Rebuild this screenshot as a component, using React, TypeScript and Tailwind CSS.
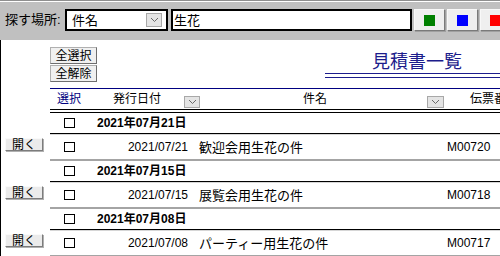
import React from 'react';

const rows = [
  { group: '2021年07月21日', date: '2021/07/21', subject: '歓迎会用生花の件', no: 'M00720' },
  { group: '2021年07月15日', date: '2021/07/15', subject: '展覧会用生花の件', no: 'M00718' },
  { group: '2021年07月08日', date: '2021/07/08', subject: 'パーティー用生花の件', no: 'M00717' },
];

function Chevron({ className }: { className: string }) {
  return (
    <div className={`flex shrink-0 items-center justify-center border border-[#a8a8a8] bg-[#e4e4e4] ${className}`}>
      <svg width="9" height="6" viewBox="0 0 9 6">
        <polyline points="1,1 4.5,4.5 8,1" fill="none" stroke="#6a6a6a" strokeWidth="1" />
      </svg>
    </div>
  );
}

function Check() {
  return <div className="h-[10px] w-[11px] border border-black bg-white" />;
}

function ColorButton({ color }: { color: string }) {
  return (
    <div className="flex h-[22px] w-[31px] shrink-0 items-center justify-center border border-t-[#f8f8f8] border-l-[#f8f8f8] border-r-[#7a7a7a] border-b-[#7a7a7a] bg-[#efefef] shadow-[1px_1px_0_#a0a0a0]">
      <div className={`h-[11px] w-[11px] ${color}`} />
    </div>
  );
}

export default function App() {
  return (
    <div className="h-[256px] w-[500px] overflow-hidden bg-white font-['Liberation_Sans','Noto_Sans_CJK_JP',sans-serif] text-black">
      {/* search toolbar */}
      <div className="h-[40px] border-t border-[#8f8f8f] bg-[#c0c0c0]">
        <div className="flex h-full items-start border-t border-white pt-[7px]">
          <div className="w-[65px] shrink-0 pl-[5px] text-[13px] leading-[22px]">探す場所:</div>
          <div className="flex h-[22px] w-[103px] shrink-0 items-center justify-between border-2 border-black bg-white pl-[5px] pr-[4px]">
            <span className="text-[13px] leading-none">件名</span>
            <Chevron className="h-[14px] w-[16px]" />
          </div>
          <div className="ml-[3px] flex h-[22px] w-[241px] shrink-0 items-center border-2 border-black bg-white pl-[1px]">
            <span className="text-[13px] leading-none">生花</span>
          </div>
          <div className="ml-[2px] flex gap-[2px]">
            <ColorButton color="bg-[#008000]" />
            <ColorButton color="bg-[#0000ff]" />
            <ColorButton color="bg-[#ff0000]" />
          </div>
        </div>
      </div>

      {/* list area */}
      <div className="h-[216px] border-l border-black">
        <div className="flex h-[48px]">
          <div className="ml-[49px] flex flex-col gap-[1px] pt-[7px]">
            {['全選択', '全解除'].map((t) => (
              <div
                key={t}
                className="flex h-[17px] w-[47px] items-center justify-center border border-[#b0b0b0] border-r-[#6e6e6e] border-b-[#6e6e6e] bg-[#f0f0f0] text-[12px] leading-none"
              >
                {t}
              </div>
            ))}
          </div>
          <div className="ml-auto w-[175px] shrink-0 pt-[12px]">
            <div className="h-[21px] pl-[47px] text-[18px] leading-[21px] whitespace-nowrap text-[#1c1c8c]">見積書一覧</div>
            <div className="h-[5px] border-y border-[#1c1c8c]" />
          </div>
        </div>

        {/* header */}
        <div className="ml-[49px] overflow-hidden">
          <div className="flex h-[21px] items-center border-t border-[#000080] text-[12px]">
            <div className="w-[38px] shrink-0 text-center text-[#000080]">選択</div>
            <div className="w-[25px] shrink-0" />
            <div className="w-[71px] shrink-0">発行日付</div>
            <Chevron className="mt-[6px] h-[12px] w-[16px]" />
            <div className="w-[103px] shrink-0" />
            <div className="w-[124px] shrink-0">件名</div>
            <Chevron className="mt-[6px] h-[12px] w-[17px]" />
            <div className="w-[26px] shrink-0" />
            <div className="shrink-0 whitespace-nowrap">伝票番号</div>
          </div>
          <div className="h-[4px] border-y border-black" />
        </div>

        {rows.map((r) => (
          <div key={r.no}>
            <div className="ml-[49px] flex h-[21px] items-center border-b border-black">
              <div className="flex w-[38px] shrink-0 justify-center">
                <Check />
              </div>
              <div className="pl-[9px] text-[12px] font-bold leading-none">{r.group}</div>
            </div>
            <div className="flex h-[27px]">
              <div className="w-[49px] shrink-0 pl-[4px] pt-[4px]">
                <div className="flex h-[13px] w-[38px] items-center justify-center border border-t-[#fafafa] border-l-[#fafafa] border-r-[#7c7c7c] border-b-[#7c7c7c] bg-[#ebebeb] text-[12px] leading-none shadow-[1px_1px_0_#b0b0b0]">
                  開く
                </div>
              </div>
              <div className="flex flex-1 items-center border-t border-b-2 border-t-[#d6d6d6] border-b-[#a4a4a4]">
                <div className="flex w-[38px] shrink-0 justify-center">
                  <Check />
                </div>
                <div className="w-[102px] shrink-0 pr-[2px] text-right text-[12px] leading-none">{r.date}</div>
                <div className="w-[255px] shrink-0 pl-[9px] text-[13px] leading-none">{r.subject}</div>
                <div className="pl-[2px] text-[12px] leading-none">{r.no}</div>
              </div>
            </div>
          </div>
        ))}
      </div>
    </div>
  );
}
